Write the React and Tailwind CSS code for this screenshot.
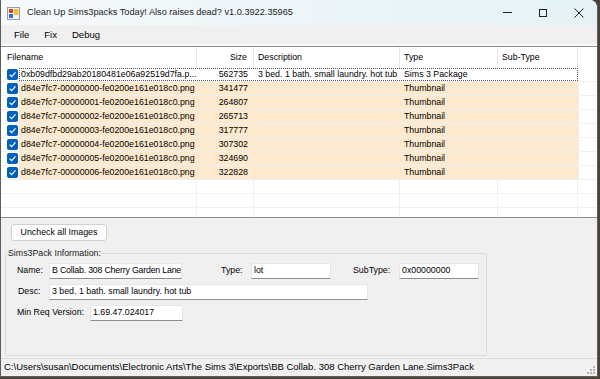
import React from "react";

const ui = { fontFamily: '"Liberation Sans", Arial, sans-serif' };

const files = [
  { name: "0xb09dfbd29ab20180481e06a92519d7fa.p...", size: "562735", desc: "3 bed. 1 bath. small laundry. hot tub", type: "Sims 3 Package", focus: true },
  { name: "d84e7fc7-00000000-fe0200e161e018c0.png", size: "341477", type: "Thumbnail" },
  { name: "d84e7fc7-00000001-fe0200e161e018c0.png", size: "264807", type: "Thumbnail" },
  { name: "d84e7fc7-00000002-fe0200e161e018c0.png", size: "265713", type: "Thumbnail" },
  { name: "d84e7fc7-00000003-fe0200e161e018c0.png", size: "317777", type: "Thumbnail" },
  { name: "d84e7fc7-00000004-fe0200e161e018c0.png", size: "307302", type: "Thumbnail" },
  { name: "d84e7fc7-00000005-fe0200e161e018c0.png", size: "324690", type: "Thumbnail" },
  { name: "d84e7fc7-00000006-fe0200e161e018c0.png", size: "322828", type: "Thumbnail" },
];

const AppIcon = () => (
  <svg width="13" height="13" viewBox="0 0 13 13">
    <rect x="0.5" y="0.5" width="12" height="12" fill="#f4f4f4" stroke="#9a9a9a" />
    <rect x="2" y="2" width="4" height="4" fill="#e03c31" />
    <rect x="2" y="7" width="4" height="4" fill="#2f6fd6" />
    <rect x="7" y="2" width="4.5" height="6" fill="#f2c230" />
  </svg>
);

const Check = () => (
  <svg width="11" height="11" viewBox="0 0 11 11">
    <rect x="0" y="0" width="11" height="11" rx="2" fill="#0060bd" />
    <path d="M2.6 5.6 L4.6 7.6 L8.5 3.4" fill="none" stroke="#fff" strokeWidth="1.2" />
  </svg>
);

const TextBox = ({ w, children }) => (
  <div className={`${w} h-[16px] bg-white border border-[#e6e6e6] border-b-[#8f8f8f] pl-[2px] flex items-center text-black whitespace-nowrap overflow-hidden`}>
    {children}
  </div>
);

export default function App() {
  return (
    <div className="w-[600px] h-[379px] bg-[#4b4436] overflow-hidden" style={ui}>
      <div className="w-[598px] h-[377px] flex flex-col bg-[#f0f0f0] border-l border-r border-b border-[#5d5d5d] rounded-tr-[8px] overflow-hidden">
        {/* title bar */}
        <div className="h-[25px] shrink-0 flex items-center bg-gradient-to-r from-[#f6f9fb] to-[#e4f2f7]">
          <div className="ml-[6px] mt-[1px]"><AppIcon /></div>
          <span className="ml-[7px] text-[9.2px] text-[#1b1b1b]">
            Clean Up Sims3packs Today! Also raises dead? v1.0.3922.35965
          </span>
          <div className="ml-auto flex h-full">
            <div className="w-[36px] flex items-center justify-center">
              <div className="w-[9px] h-px bg-[#222]" />
            </div>
            <div className="w-[36px] flex items-center justify-center">
              <div className="w-[8px] h-[8px] border border-[#222]" />
            </div>
            <div className="w-[36px] flex items-center justify-center">
              <svg width="10" height="10" viewBox="0 0 10 10">
                <path d="M0.5 0.5 L9.5 9.5 M9.5 0.5 L0.5 9.5" stroke="#222" strokeWidth="1" />
              </svg>
            </div>
          </div>
        </div>

        {/* menu */}
        <div className="h-[19px] shrink-0 flex items-center pt-[1px] text-[9.5px] text-black">
          <span className="ml-[13px]">File</span>
          <span className="ml-[15px]">Fix</span>
          <span className="ml-[15px]">Debug</span>
        </div>
        <div className="h-[2px] shrink-0 bg-[#fafafa]" />

        {/* list view */}
        <div className="h-[172px] shrink-0 bg-white border-t border-b border-[#8c8c8c] overflow-hidden text-[8.8px] text-black">
          <div className="h-[21px] flex">
            <div className="w-[196px] pl-[6px] flex items-center border-r border-[#e5e5e5]">Filename</div>
            <div className="w-[57px] pr-[6px] flex items-center justify-end border-r border-[#e5e5e5]">Size</div>
            <div className="w-[146px] pl-[4px] flex items-center border-r border-[#e5e5e5]">Description</div>
            <div className="w-[98px] pl-[4px] flex items-center border-r border-[#e5e5e5]">Type</div>
            <div className="w-[80px] pl-[4px] flex items-center border-r border-[#e5e5e5]">Sub-Type</div>
            <div className="flex-1" />
          </div>
          {files.map((f, i) => (
            <div key={i} className="h-[14px] flex border-b border-[#f0f0f0]">
              <div className="w-[18px] flex items-center justify-end pr-[1px]"><Check /></div>
              <div
                className={`w-[559px] flex items-center ${f.focus ? "bg-white outline-1 outline-dotted outline-[#555] -outline-offset-1" : "bg-[#fde9cd]"}`}
              >
                <div className="w-[178px] pl-[2px] whitespace-nowrap overflow-hidden">{f.name}</div>
                <div className="w-[57px] pr-[6px] text-right">{f.size}</div>
                <div className="w-[146px] pl-[4px] whitespace-nowrap overflow-hidden">{f.desc}</div>
                <div className="w-[98px] pl-[4px]">{f.type}</div>
                <div className="w-[80px]" />
              </div>
              <div className="flex-1 border-l border-[#f0f0f0]" />
            </div>
          ))}
          {[0, 1, 2].map((r) => (
            <div key={r} className="h-[14px] flex border-b border-[#f0f0f0]">
              <div className="w-[196px] border-r border-[#f0f0f0]" />
              <div className="w-[57px] border-r border-[#f0f0f0]" />
              <div className="w-[146px] border-r border-[#f0f0f0]" />
              <div className="w-[98px] border-r border-[#f0f0f0]" />
              <div className="w-[80px] border-r border-[#f0f0f0]" />
              <div className="flex-1" />
            </div>
          ))}
        </div>

        {/* lower panel */}
        <div className="flex-1 flex flex-col text-[8.8px] text-black">
          <button className="ml-[10px] mt-[6px] w-[96px] h-[17px] bg-[#fdfdfd] border border-[#d0d0d0] rounded-[3px] text-[8.8px] flex items-center justify-center">
            Uncheck all Images
          </button>
          <fieldset className="ml-[4px] mt-[6px] w-[482px] h-[109px] border border-[#dadada] rounded-[2px]">
            <legend className="ml-[2px] leading-[12px] text-[#222]">Sims3Pack Information:</legend>
            <div className="mt-[4px] flex items-center">
              <span className="w-[43px] pl-[11px]">Name:</span>
              <TextBox w="w-[133px] tracking-[-0.2px]">B Collab. 308 Cherry Garden Lane</TextBox>
              <span className="ml-[39px] w-[30px]">Type:</span>
              <TextBox w="w-[80px]">lot</TextBox>
              <span className="ml-[22px] w-[46px]">SubType:</span>
              <TextBox w="w-[80px]">0x00000000</TextBox>
            </div>
            <div className="mt-[5px] flex items-center">
              <span className="w-[43px] pl-[12px]">Desc:</span>
              <TextBox w="w-[319px]">3 bed. 1 bath. small laundry. hot tub</TextBox>
            </div>
            <div className="mt-[5px] flex items-center">
              <span className="w-[84px] pl-[11px]">Min Req Version:</span>
              <TextBox w="w-[93px]">1.69.47.024017</TextBox>
            </div>
          </fieldset>
        </div>

        {/* status bar */}
        <div className="h-[18px] shrink-0 flex items-center border-t border-[#dcdcdc] text-[9.5px] text-black">
          <span className="ml-[3px] whitespace-nowrap">
            C:\Users\susan\Documents\Electronic Arts\The Sims 3\Exports\BB Collab. 308 Cherry Garden Lane.Sims3Pack
          </span>
          <svg className="ml-auto mr-[2px] self-end mb-[2px]" width="9" height="9" viewBox="0 0 9 9" fill="#b5b5b5">
            <rect x="7" y="1" width="2" height="2" />
            <rect x="4" y="4" width="2" height="2" />
            <rect x="7" y="4" width="2" height="2" />
            <rect x="1" y="7" width="2" height="2" />
            <rect x="4" y="7" width="2" height="2" />
            <rect x="7" y="7" width="2" height="2" />
          </svg>
        </div>
      </div>
    </div>
  );
}
